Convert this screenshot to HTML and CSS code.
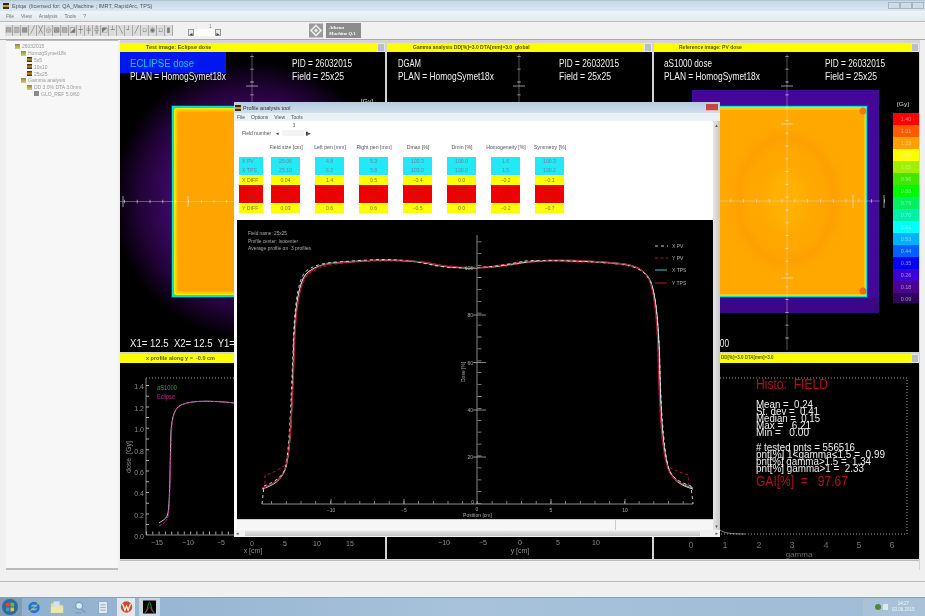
FILE: index.html
```html
<!DOCTYPE html>
<html lang="en">
<head>
<meta charset="utf-8">
<title>Epiqa</title>
<link rel="stylesheet" href="styles.css">
</head>
<body>
<div class="app">
  <header class="titlebar">
    <span class="app-icon"></span>
    <span class="title-text">Epiqa  (licensed for: QA_Machine ; IMRT, RapidArc, TPS)</span>
    <div class="win-btns"><i></i><i></i><i></i></div>
  </header>
  <nav class="menubar"><span>File</span><span>View</span><span>Analysis</span><span>Tools</span><span>?</span></nav>
  <div class="toolbar">
    <div class="tools">
      <b>▤</b><b>▥</b><b>▦</b><b>╱</b><b>╳</b><b>◎</b><b>▩</b><b>▨</b><b>◪</b><b>┼</b><b>╪</b><b>╬</b><b>◩</b><b>┴</b><b>╲</b><b>┘</b><b>╱</b><b>▫</b><b>◉</b><b>▫</b><b>▮</b>
    </div>
    <div class="spinner">
      <span class="spin-num">1</span>
      <span class="spin-arrow">◂</span><span class="spin-box"></span><span class="spin-arrow">▸</span>
    </div>
    <div class="logo">
      <svg class="logo-mark" viewBox="0 0 14 14"><rect width="14" height="14" fill="#9a9a9a"/><path d="M7 2 12 7 7 12 2 7Z" fill="none" stroke="#eee" stroke-width="1.6"/><path d="M7 5 9 7 7 9 5 7Z" fill="#eee"/></svg>
      <div class="logo-box"><em>Athena</em><em>Machine QA</em></div>
    </div>
  </div>

  <main class="main">
    <aside class="tree">
      <div class="node l0"><i class="f"></i>26032015</div>
      <div class="node l1"><i class="f"></i>HomogSymet18x</div>
      <div class="node l2"><i class="th"></i>5x5</div>
      <div class="node l2"><i class="th"></i>10x10</div>
      <div class="node l2"><i class="th"></i>25x25</div>
      <div class="node l1"><i class="f"></i>Gamma analysis</div>
      <div class="node l2"><i class="f"></i>DD 3.0% DTA 3.0mm</div>
      <div class="node l3"><i class="d"></i>GLO_REF 5.0/60</div>
    </aside>

    <div class="panels">
      <section class="panel">
        <div class="phead"><span class="ptitle pt1">Test image: Eclipse dose</span><i class="pbtn"></i></div>
        <svg class="pbody top" viewBox="120 52 265 300">
          <defs>
            <radialGradient id="glow" gradientUnits="userSpaceOnUse" cx="252" cy="200" r="140">
              <stop offset="0.55" stop-color="#40086a"/><stop offset="0.8" stop-color="#220338"/><stop offset="1" stop-color="#000"/>
            </radialGradient>
            <filter id="soft"><feGaussianBlur stdDeviation="5"/></filter>
            <g id="field">
              <rect x="171" y="105" width="163" height="193" fill="#0028ff"/>
              <rect x="172" y="106" width="161" height="191" fill="#00e0d0"/>
              <rect x="173" y="107" width="159" height="189" rx="1" fill="#28e840"/>
              <rect x="174" y="108" width="157" height="187" rx="2" fill="#e8f000"/>
              <rect x="175.500" y="109.500" width="154" height="184" rx="3" fill="#ffc400"/>
              <rect x="177.500" y="111.500" width="150" height="180" rx="4" fill="#ffa400"/>
            </g>
          </defs>
          <rect x="120" y="52" width="265" height="300" fill="url(#glow)"/>
          <use href="#field"/>
          <rect x="120" y="52" width="106" height="21" fill="#0018f0"/>
          <path class="cross" d="M252 54V350M120 201.500H385"/>
          <path class="ticks" d="M252 56V350"/>
          <path class="ticks" d="M124 201.500H385"/>
          <path class="major" d="M246 86H258M123 196V207M188 196V207"/>
          <text class="lg cy" x="130" y="67" textLength="64" lengthAdjust="spacingAndGlyphs">ECLIPSE dose</text>
          <text class="lg" x="130" y="80" textLength="96" lengthAdjust="spacingAndGlyphs">PLAN = HomogSymet18x</text>
          <text class="lg" x="292" y="67" textLength="60" lengthAdjust="spacingAndGlyphs">PID = 26032015</text>
          <text class="lg" x="292" y="80" textLength="52" lengthAdjust="spacingAndGlyphs">Field = 25x25</text>
          <text class="sm" x="361" y="103" textLength="12" lengthAdjust="spacingAndGlyphs">[Gy]</text>
          <text class="lg" x="130" y="347" textLength="170" lengthAdjust="spacingAndGlyphs">X1= 12.5  X2= 12.5  Y1= 12.5  Y2= 12.5</text>
        </svg>
      </section>

      <section class="panel">
        <div class="phead"><span class="ptitle pt2">Gamma analysis DD[%]=3.0 DTA[mm]=3.0  global</span><i class="pbtn"></i></div>
        <svg class="pbody top" viewBox="387 52 265 300">
          <path class="cross" d="M519 54V350"/>
          <path class="ticks" d="M519 56V350"/>
          <path class="major" d="M513 86H525"/>
          <text class="lg" x="398" y="67" textLength="23" lengthAdjust="spacingAndGlyphs">DGAM</text>
          <text class="lg" x="398" y="80" textLength="96" lengthAdjust="spacingAndGlyphs">PLAN = HomogSymet18x</text>
          <text class="lg" x="559" y="67" textLength="60" lengthAdjust="spacingAndGlyphs">PID = 26032015</text>
          <text class="lg" x="559" y="80" textLength="52" lengthAdjust="spacingAndGlyphs">Field = 25x25</text>
        </svg>
      </section>

      <section class="panel">
        <div class="phead"><span class="ptitle pt3">Reference image: PV dose</span><i class="pbtn"></i></div>
        <svg class="pbody top" viewBox="654 52 265 300">
          <rect x="692" y="90" width="187" height="223" fill="#43089a"/>
          <rect x="692" y="298" width="187" height="15" fill="#3c0688"/>
          <rect x="706" y="105" width="162" height="193" fill="#0044ee"/>
          <rect x="707" y="106" width="160" height="191" fill="#10e0c8"/>
          <rect x="708" y="107" width="158" height="189" fill="#c0ee20"/>
          <rect x="709" y="108" width="156" height="187" fill="#ffc800"/>
          <rect x="710" y="110" width="154" height="184" fill="#ffa800"/>
          <g filter="url(#soft)">
            <ellipse cx="786" cy="200" rx="48" ry="62" fill="none" stroke="#fb9c00" stroke-width="8"/>
            <ellipse cx="786" cy="200" rx="20" ry="30" fill="#ffb000"/>
          </g>
          <circle cx="863" cy="111" r="3.500" fill="#f07a10"/>
          <circle cx="863" cy="291" r="3.500" fill="#f2680c"/>
          <path class="cross" d="M787 54V350M692 201H880"/>
          <path class="ticks" d="M787 56V350"/>
          <path class="ticks" d="M692 201H890"/>
          <path class="major" d="M781 86H793M781 124H793M781 278H793M853 195V208M884 195V208"/>
          <text class="lg" x="664" y="67" textLength="48" lengthAdjust="spacingAndGlyphs">aS1000 dose</text>
          <text class="lg" x="664" y="80" textLength="96" lengthAdjust="spacingAndGlyphs">PLAN = HomogSymet18x</text>
          <text class="lg" x="825" y="67" textLength="60" lengthAdjust="spacingAndGlyphs">PID = 26032015</text>
          <text class="lg" x="825" y="80" textLength="52" lengthAdjust="spacingAndGlyphs">Field = 25x25</text>
          <text class="sm" x="897" y="106" textLength="12" lengthAdjust="spacingAndGlyphs">[Gy]</text>
          <g class="bar">
            <rect x="893" y="113" width="27" height="12" fill="#ff0000"/><text x="906" y="121">1.40</text>
            <rect x="893" y="125" width="27" height="12" fill="#ff5a00"/><text x="906" y="133">1.31</text>
            <rect x="893" y="137" width="27" height="12" fill="#ffa000"/><text x="906" y="145">1.23</text>
            <rect x="893" y="149" width="27" height="12" fill="#ffff00"/><text x="906" y="157">1.14</text>
            <rect x="893" y="161" width="27" height="12" fill="#a0f000"/><text x="906" y="169">1.05</text>
            <rect x="893" y="173" width="27" height="12" fill="#40e800"/><text x="906" y="181">0.96</text>
            <rect x="893" y="185" width="27" height="12" fill="#00f800"/><text x="906" y="193">0.88</text>
            <rect x="893" y="197" width="27" height="12" fill="#00f060"/><text x="906" y="205">0.79</text>
            <rect x="893" y="209" width="27" height="12" fill="#00f0a8"/><text x="906" y="217">0.70</text>
            <rect x="893" y="221" width="27" height="12" fill="#00ffff"/><text x="906" y="229">0.61</text>
            <rect x="893" y="233" width="27" height="12" fill="#00b0ff"/><text x="906" y="241">0.53</text>
            <rect x="893" y="245" width="27" height="12" fill="#0060ff"/><text x="906" y="253">0.44</text>
            <rect x="893" y="257" width="27" height="12" fill="#0000f8"/><text x="906" y="265">0.35</text>
            <rect x="893" y="269" width="27" height="12" fill="#3c00d0"/><text x="906" y="277">0.26</text>
            <rect x="893" y="281" width="27" height="12" fill="#4a0090"/><text x="906" y="289">0.18</text>
            <rect x="893" y="293" width="27" height="10" fill="#30005c"/><text x="906" y="301">0.09</text>
          </g>
          <text class="lg" x="729" y="347" text-anchor="end" textLength="36" lengthAdjust="spacingAndGlyphs">MU = 100</text>
        </svg>
      </section>

      <section class="panel">
        <div class="phead"><span class="ptitle pt4">x profile along y =  -0.0 cm</span><i class="pbtn"></i></div>
        <svg class="pbody bot" viewBox="120 362 265 196">
          <path class="axis" d="M146 377V534H385"/>
          <path class="dots" d="M146 377H385"/>
          <path class="yticks" d="M147.500 384V534"/>
          <path class="xticks" d="M146 532H385"/>
          <g class="num">
            <text x="144" y="388" text-anchor="end">1.4</text><text x="144" y="410" text-anchor="end">1.2</text>
            <text x="144" y="431" text-anchor="end">1.0</text><text x="144" y="453" text-anchor="end">0.8</text>
            <text x="144" y="474" text-anchor="end">0.6</text><text x="144" y="495" text-anchor="end">0.4</text>
            <text x="144" y="517" text-anchor="end">0.2</text><text x="144" y="538" text-anchor="end">0.0</text>
            <text x="157" y="544" text-anchor="middle">−15</text><text x="188" y="544" text-anchor="middle">−10</text>
            <text x="221" y="544" text-anchor="middle">−5</text><text x="252" y="545" text-anchor="middle">0</text>
            <text x="285" y="545" text-anchor="middle">5</text><text x="317" y="545" text-anchor="middle">10</text>
            <text x="350" y="545" text-anchor="middle">15</text><text x="253" y="552" text-anchor="middle">x [cm]</text>
            <text transform="translate(131 472) rotate(-90)" textLength="32" lengthAdjust="spacingAndGlyphs">dose  [Gy]</text>
          </g>
          <path class="c-grey" d="M159 522 C163 519 167 518 168 512 C170 500 170 460 171 430 C172 415 175 407 181 404 C190 400 205 399 235 402"/>
          <path class="c-mag" d="M159 525 C164 523 167 520 168.500 514 C170 500 170.500 460 171.500 430 C172.500 415 175 407 181 404 C190 400 205 399 235 402"/>
          <text class="lab green" x="157" y="389" textLength="20" lengthAdjust="spacingAndGlyphs">aS1000</text>
          <text class="lab mag" x="157" y="398" textLength="18" lengthAdjust="spacingAndGlyphs">Eclipse</text>
        </svg>
      </section>

      <section class="panel">
        <div class="phead"></div>
        <svg class="pbody bot" viewBox="387 362 265 196">
          <g class="num">
            <text x="444" y="544" text-anchor="middle">−10</text><text x="483" y="544" text-anchor="middle">−5</text>
            <text x="520" y="544" text-anchor="middle">0</text><text x="558" y="544" text-anchor="middle">5</text>
            <text x="596" y="544" text-anchor="middle">10</text><text x="520" y="552" text-anchor="middle">y [cm]</text>
          </g>
        </svg>
      </section>

      <section class="panel">
        <div class="phead"><span class="ptitle pt6">DD[%]=3.0 DTA[mm]=3.0</span><i class="pbtn"></i></div>
        <svg class="pbody bot" viewBox="654 362 265 196">
          <path class="dots" d="M690 377H907V533H690"/>
          <path class="axis" d="M720 529C724 532 730 533 745 533"/>
          <g class="num big">
            <text x="691" y="547" text-anchor="middle">0</text><text x="725" y="547" text-anchor="middle">1</text>
            <text x="759" y="547" text-anchor="middle">2</text><text x="792" y="547" text-anchor="middle">3</text>
            <text x="826" y="547" text-anchor="middle">4</text><text x="859" y="547" text-anchor="middle">5</text>
            <text x="892" y="547" text-anchor="middle">6</text><text class="gm" x="799" y="556" text-anchor="middle">gamma</text>
          </g>
          <text class="red h1" x="756" y="388" textLength="72" lengthAdjust="spacingAndGlyphs">Histo:  FIELD</text>
          <g class="stat">
            <text x="756" y="407" textLength="57" lengthAdjust="spacingAndGlyphs">Mean =  0.24</text>
            <text x="756" y="414" textLength="63" lengthAdjust="spacingAndGlyphs">St. dev =  0.41</text>
            <text x="756" y="421" textLength="64" lengthAdjust="spacingAndGlyphs">Median =  0.15</text>
            <text x="756" y="428" textLength="55" lengthAdjust="spacingAndGlyphs">Max =   6.21</text>
            <text x="756" y="435" textLength="53" lengthAdjust="spacingAndGlyphs">Min =   0.00</text>
            <text x="756" y="450" textLength="99" lengthAdjust="spacingAndGlyphs"># tested pnts = 556516</text>
            <text x="756" y="457" textLength="129" lengthAdjust="spacingAndGlyphs">pnt[%] 1&lt;gamma&lt;1.5 =  0.99</text>
            <text x="756" y="464" textLength="115" lengthAdjust="spacingAndGlyphs">pnt[%] gamma&gt;1.5 =  1.34</text>
            <text x="756" y="471" textLength="108" lengthAdjust="spacingAndGlyphs">pnt[%] gamma&gt;1 =  2.33</text>
          </g>
          <text class="red h2" x="756" y="485" textLength="92" lengthAdjust="spacingAndGlyphs">GAI[%]  =   97.67</text>
        </svg>
      </section>

      <div class="panels-foot"></div>
    </div>
  </main>

  <div class="statusbar"></div>
  <div class="spacer"></div>

  <footer class="taskbar">
    <div class="orb"><svg viewBox="0 0 16 16"><circle cx="8" cy="8" r="8" fill="#2a6f92"/><path d="M4 4 7.500 3.500V7.500H4Z" fill="#e8452c"/><path d="M8.500 3.500 12 4V7.500H8.500Z" fill="#6cbb3c"/><path d="M4 8.500H7.500V12.500L4 12Z" fill="#2e9be0"/><path d="M8.500 8.500H12V12L8.500 12.500Z" fill="#f5c02a"/></svg></div>
    <div class="tb-ico"><svg viewBox="0 0 16 16"><circle cx="8" cy="8" r="5" fill="none" stroke="#1c78d0" stroke-width="3"/><path d="M3 8H13" stroke="#1c78d0" stroke-width="2"/><path d="M1 13C5 12 12 5 14 1" fill="none" stroke="#f0c030"/></svg></div>
    <div class="tb-ico"><svg viewBox="0 0 16 16"><path d="M1 3H7L8 5H15V14H1Z" fill="#e8d890"/><rect x="4" y="1" width="7" height="7" fill="#cfe4f0"/><path d="M1 7H15V14H1Z" fill="#f0e6a8"/></svg></div>
    <div class="tb-ico"><svg viewBox="0 0 16 16"><circle cx="7" cy="6" r="4" fill="#dceaf4" stroke="#6fa0c6" stroke-width="1.500"/><path d="M10 10 14 14M3 14H9" stroke="#8c99a6" stroke-width="1.500"/></svg></div>
    <div class="tb-ico"><svg viewBox="0 0 16 16"><rect x="3" y="1" width="10" height="14" fill="#dfe9f2" stroke="#8aa6c0"/><path d="M5 5H11M5 8H11M5 11H11" stroke="#8aa6c0"/></svg></div>
    <div class="tb-app"><svg viewBox="0 0 16 16"><circle cx="8" cy="8" r="7" fill="#d04828"/><path d="M3 4 6 12 8 7 10 12 13 4" fill="none" stroke="#fff4d8" stroke-width="1.600"/></svg></div>
    <div class="tb-app dark"><svg viewBox="0 0 16 16"><rect width="16" height="16" fill="#000"/><path d="M2 15C6 14 6 2 8 2S10 14 14 15" fill="none" stroke="#20c040"/><path d="M2 15C5 15 6 8 8 8S11 15 14 15" fill="none" stroke="#c02070"/></svg></div>
    <div class="tray">
      <i class="tray-a"></i><i class="tray-b"></i>
      <div class="clock"><span>14:27</span><span>03.06.2015</span></div>
    </div>
  </footer>

  <div class="dialog">
    <div class="dlg-title"><span class="app-icon"></span><span>Profile analysis tool</span><i class="dlg-close"></i></div>
    <div class="dlg-menu"><span>File</span><span>Options</span><span>View</span><span>Tools</span></div>
    <div class="dlg-body">
      <div class="dlg-main">
        <div class="controls">
          <span class="fn-label">Field number</span>
          <span class="fn-arrow">◂</span>
          <span class="fn-box"><span class="fn-val">3</span></span>
          <span class="fn-arrow">▮▸</span>
        </div>
        <div class="stats">
          <span class="hd"></span><span class="hd">Field size [cm]</span><span class="hd">Left pen [mm]</span><span class="hd">Right pen [mm]</span><span class="hd">Dmax [%]</span><span class="hd">Dmin [%]</span><span class="hd">Homogeneity [%]</span><span class="hd">Symmetry [%]</span>

          <span class="c cy lbl">X PV</span><span class="c cy">25.06</span><span class="c cy">4.8</span><span class="c cy">5.3</span><span class="c cy">103.3</span><span class="c cy">100.0</span><span class="c cy">1.6</span><span class="c cy">100.3</span>
          <span class="c cy lbl">X TPS</span><span class="c cy">25.10</span><span class="c cy">6.2</span><span class="c cy">5.8</span><span class="c cy">103.0</span><span class="c cy">100.0</span><span class="c cy">1.5</span><span class="c cy">100.2</span>
          <span class="c ye lbl">X DIFF</span><span class="c ye">0.04</span><span class="c ye">1.4</span><span class="c ye">0.5</span><span class="c ye">−0.4</span><span class="c ye">0.0</span><span class="c ye">−0.2</span><span class="c ye">−0.1</span>
          <span class="c re lbl">Y PV</span><span class="c re">25.07</span><span class="c re">5.1</span><span class="c re">6.3</span><span class="c re">103.1</span><span class="c re">100.0</span><span class="c re">1.7</span><span class="c re">100.9</span>
          <span class="c re lbl">Y TPS</span><span class="c re">25.10</span><span class="c re">5.5</span><span class="c re">5.6</span><span class="c re">102.6</span><span class="c re">100.0</span><span class="c re">1.5</span><span class="c re">100.2</span>
          <span class="c ye lbl">Y DIFF</span><span class="c ye">0.03</span><span class="c ye">0.6</span><span class="c ye">0.6</span><span class="c ye">−0.5</span><span class="c ye">0.0</span><span class="c ye">−0.2</span><span class="c ye">−0.7</span>
        </div>
        <svg class="plot" viewBox="237 218 476 299">
          <path class="p-axis" d="M477 233V502M262 502H693M477 500V502"/>
          <path class="p-yt" d="M479.500 502V233"/>
          <path class="p-xt" d="M271.200 500.500H690"/>
          <path class="p-axis" d="M473 265.500H486M473 313H486M473 360.500H486M473 408H486M473 455H486M331 497V502M404 497V502M551 497V502M625 497V502"/>
          <g class="p-txt">
            <text x="248" y="233" textLength="39" lengthAdjust="spacingAndGlyphs">Field name: 25x25</text>
            <text x="248" y="241" textLength="50" lengthAdjust="spacingAndGlyphs">Profile center: Isocenter</text>
            <text x="248" y="248" textLength="63" lengthAdjust="spacingAndGlyphs">Average profile on  3 profiles</text>
            <text x="473" y="267.500" text-anchor="end">100</text><text x="473" y="315" text-anchor="end">80</text>
            <text x="473" y="362.500" text-anchor="end">60</text><text x="473" y="410" text-anchor="end">40</text>
            <text x="473" y="457" text-anchor="end">20</text><text x="474" y="502" text-anchor="end">0</text>
            <text x="331" y="510" text-anchor="middle">−10</text><text x="404" y="510" text-anchor="middle">−5</text>
            <text x="477" y="509" text-anchor="middle">0</text><text x="551" y="510" text-anchor="middle">5</text>
            <text x="625" y="510" text-anchor="middle">10</text>
            <text x="463" y="515" textLength="29" lengthAdjust="spacingAndGlyphs">Position [cm]</text>
            <text transform="translate(465 380) rotate(-90)">Dose [%]</text>
            <text x="672" y="246">X PV</text><text x="672" y="258">Y PV</text>
            <text x="672" y="270">X TPS</text><text x="672" y="283">Y TPS</text>
          </g>
          <path class="l-cy" d="M655 268H667M262 486C272 483 282 478 286 464C291 445 292 400 294 350C295 310 298 282 306 272C312 266 322 262 336 260.500C355 259 370 258 385 258C405 258 420 259 432 262C445 265 460 266 477 265.700C495 265 510 262 525 260C540 258 555 258 570 258.500C590 259 610 260 625 262C638 264 647 270 651 280C656 295 658 320 659 350C660 400 662 445 668 464C672 478 682 483 693 486"/>
          <path class="l-wh" d="M262 487C272 484 282 479 286 465C291 445 292 400 293.500 350C294.500 310 298 282 306 272C312 266 322 262 336 261C355 260 370 258 385 258.500C405 258.500 420 259.500 432 262.500C445 265 460 266.500 477 266C495 265.500 510 262.500 525 260.500C540 258.500 555 258.500 570 259C590 259.500 610 260.500 625 262.500C638 264.500 647 270 651 281C656 295 658 320 659.500 350C660.500 400 662 445 668 465C672 479 682 484 693 487"/>
          <path class="l-re" d="M655 281H667M262 486C272 483 282 478 286 464C291 445 292.500 400 294.500 350C295.500 310 299 282 307 272.500C313 266.500 322 262 336 261C355 259.500 370 257.500 385 258C405 258 420 259 432 262C445 265 460 265.500 477 265.500C495 265 510 261.500 525 259.500C540 258 555 258 570 258C590 259 610 260 625 262C638 264 646 269 650 280C655 295 657 320 658 350C659 400 661 445 667 464C671 478 680 481 690 484"/>
          <path class="d-wh" d="M655 244H668M262 502L264 484C272 481 280 477 285 468C289 455 291 400 293 350C294 310 297 280 305 270C312 264 322 261 336 260C355 259 370 257.500 385 257.500C405 258 420 260 432 263C445 266 460 266 477 265.500C495 265 510 262 525 259C540 258 555 258.500 570 259C590 259.500 610 261 625 263C638 265 647 271 651 281C656 295 658 320 659.500 350C660.500 400 663 445 669 468C673 477 682 481 691 484L693 502"/>
          <path class="d-re" d="M655 256H668M265 487L265 473C273 471 280 467 285 463C290 450 292 400 294 350C295 310 299 284 307 274C313 268 322 264 336 262C355 260 370 259 385 259C405 259 420 259 432 261C445 264 460 265 477 266C495 266 510 264 525 261C540 259 555 259 570 260C590 260 610 261 625 263C638 265 646 270 650 279C655 295 657 320 658 350C659 400 661 445 667 463C672 468 680 470 688 473L689 486"/>
        </svg>
        <div class="dlg-status"><span></span><span></span></div>
      </div>
      <div class="vscroll"><span>▴</span><span>▾</span></div>
    </div>
    <div class="hscroll"><span>◂</span><div class="thumb"></div><span>▸</span></div>
  </div>
</div>
</body>
</html>
```

FILE: styles.css
```css
* { box-sizing: border-box; }
html, body { margin: 0; padding: 0; height: 100%; overflow: hidden; background: #f0f0f0; }
body { font-family: "Liberation Sans", Arial, sans-serif; }

.app {
  position: relative;
  width: 925px;
  height: 616px;
  display: flex;
  flex-direction: column;
  filter: blur(0.5px);
}

.titlebar {
  height: 11px;
  display: flex;
  align-items: center;
  gap: 3px;
  padding: 0 0 0 3px;
  background: linear-gradient(#a9bccb 0, #c6d7e6 12%, #dbe7f1 100%);
  font-size: 5.5px;
  color: #555;
}
.app-icon {
  width: 6px;
  height: 6px;
  flex: none;
  background: linear-gradient(#2b2b10 0 40%, #c0a030 40% 60%, #40300c 60%);
}
.title-text { white-space: pre; }
.win-btns { margin-left: auto; display: flex; gap: 0; margin-right: 1px; }
.win-btns i { width: 12px; height: 7px; border: 1px solid #a9b7c3; background: #cfdbe6; }

.menubar {
  height: 11px;
  display: flex;
  align-items: center;
  gap: 7px;
  padding-left: 6px;
  background: linear-gradient(#ecf3f9, #e3e9ef);
  border-bottom: 1px solid #bbb;
  font-size: 5px;
  color: #777;
}

.toolbar {
  height: 18px;
  display: flex;
  align-items: center;
  background: #f1f1f1;
  border-bottom: 1px solid #aaa;
}
.tools { display: flex; padding-left: 5px; width: 188px; }
.tools b {
  width: 8px;
  height: 11px;
  font: 400 7px/11px "DejaVu Sans", sans-serif;
  text-align: center;
  color: #777;
  background: #dcdcdc;
  border-right: 1px solid #aaa;
  overflow: hidden;
}
.spinner { position: relative; display: flex; align-items: center; width: 121px; padding-top: 4px; font-size: 6px; color: #444; }
.spin-num { position: absolute; left: 21px; top: -2px; font-size: 5px; color: #888; }
.spin-arrow { width: 6px; height: 7px; line-height: 7px; text-align: center; font-family: "DejaVu Sans", sans-serif; background: #e8e8e8; border: 1px solid #999; }
.spin-box { width: 21px; height: 7px; background: #fff; }
.logo { display: flex; gap: 3px; align-items: center; }
.logo-mark { width: 14px; height: 15px; display: block; }
.logo-box {
  width: 35px;
  height: 15px;
  background: #8c8c8c;
  display: flex;
  flex-direction: column;
  justify-content: center;
  padding-left: 3px;
  color: #fff;
  font: italic 700 5px/6px "Liberation Serif", serif;
}
.logo-box em { white-space: nowrap; }

.main { height: 530px; display: flex; padding-left: 6px; background: #f0f0f0; }
.tree {
  width: 112px;
  padding: 2px 0 0 0;
  background: #f7f7f7;
  border-top: 1px solid #bbb;
  border-bottom: 2px solid #bbb;
  font-size: 5px;
  color: #999;
  white-space: nowrap;
}
.node { display: flex; align-items: center; gap: 2px; height: 6.800px; }
.l0 { padding-left: 9px; }
.l1 { padding-left: 15px; }
.l2 { padding-left: 21px; }
.l3 { padding-left: 28px; }
.node i { width: 5px; height: 5px; flex: none; }
.node .f { background: linear-gradient(#8a8a40, #d8cc78); }
.node .th { background: linear-gradient(#2c2410, #c08a20 50%, #2c2410); }
.node .d { background: #8c8c8c; }

.panels {
  margin-left: 2px;
  width: 800px;
  padding: 3px 0 0 0;
  display: grid;
  grid-template-columns: repeat(3, 265px);
  grid-template-rows: 309px 204px 11px;
  column-gap: 2px;
  row-gap: 2px;
  background: #d4d4d4;
  align-content: start;
}
.panel { display: flex; flex-direction: column; background: #000; min-width: 0; }
.phead {
  height: 8.500px;
  flex: none;
  position: relative;
  background: #ffff00;
  display: flex;
  align-items: center;
  font: 700 5.500px/8px "Liberation Sans", sans-serif;
  color: #555500;
  white-space: pre;
}
.ptitle { display: block; transform-origin: left center; }
.pt1 { margin-left: 26px; }
.pt2 { margin-left: 26px; font-size: 5px; }
.pt3 { margin-left: 25px; font-size: 5px; }
.pt4 { margin-left: 26px; }
.pt6 { margin-left: 67px; font-size: 4.500px; }
.pbtn { position: absolute; right: 0; top: 0; width: 8px; height: 8.500px; background: #b9bfc6; border: 1px solid #e6e6e6; }
.pbody { display: block; width: 265px; flex: none; background: #000; }
.pbody.top { height: 300px; }
.pbody.bot { height: 196px; }
.panels-foot { grid-column: 1 / -1; background: #f0f0f0; border-top: 1px solid #bbb; }

.cross { stroke: #e8e8e8; stroke-width: 0.6; fill: none; opacity: 0.6; }
.ticks { stroke: #eee; stroke-width: 3.500; stroke-dasharray: 0.8 12; fill: none; opacity: 0.7; }
.major { stroke: #eee; stroke-width: 0.8; fill: none; opacity: 0.75; }

svg text { font-family: "Liberation Sans", Arial, sans-serif; white-space: pre; }
.lg { font-size: 11px; fill: #f0f0f0; }
.lg.cy { fill: #00c8f0; }
.sm { font-size: 6px; fill: #ddd; }
.bar text { font-size: 5.500px; fill: #eee; fill-opacity: 0.55; text-anchor: middle; }

.axis { fill: none; stroke: #aaa; stroke-width: 0.8; }
.dots { fill: none; stroke: #999; stroke-width: 1; stroke-dasharray: 1 2; }
.yticks { stroke: #aaa; stroke-width: 3; stroke-dasharray: 1 9.700; fill: none; }
.xticks { stroke: #aaa; stroke-width: 3; stroke-dasharray: 1 5.300; fill: none; }
.num text { font-size: 7px; fill: #8c8c8c; }
.num.big text { font-size: 9px; fill: #6c6c6c; }
.num.big .gm { font-size: 8px; }
.c-grey { fill: none; stroke: #ccc; stroke-width: 1; }
.c-mag { fill: none; stroke: #c02090; stroke-width: 0.9; stroke-dasharray: 3 1; }
.lab { font-size: 6.500px; }
.green { fill: #1fa51f; }
.mag { fill: #c02090; }
.red { fill: #b01020; }
.h1 { font-size: 14px; }
.h2 { font-size: 15px; }
.stat text { font-size: 11.500px; fill: #eee; }

.statusbar { height: 12px; background: #f0f0f0; border-bottom: 1px solid #bbb; }
.spacer { flex: 1; background: #f0f0f0; }

.taskbar {
  height: 19px;
  display: flex;
  align-items: center;
  background: linear-gradient(90deg, #8fb0cf, #a7c2da 50%, #9fbcd6);
  border-top: 1px solid #8a9fb2;
}
.orb { width: 22px; height: 100%; padding: 1px 2px; background: #7f9bb5; display: flex; align-items: center; }
.orb svg { width: 16px; height: 16px; display: block; }
.tb-ico { width: 23px; display: flex; justify-content: center; }
.tb-ico svg { width: 14px; height: 15px; display: block; }
.tb-app { width: 18px; height: 100%; margin-left: 3px; display: flex; align-items: center; justify-content: center; background: #dfe7ee; }
.tb-app.dark { width: 21px; margin-left: 4px; background: #c9d6e2; }
.tb-app svg { width: 13px; height: 14px; display: block; }
.tray { margin-left: auto; width: 62px; height: 100%; display: flex; align-items: center; gap: 2px; padding-left: 12px; background: #a9c2d8; }
.tray-a { width: 6px; height: 6px; background: #4f8a3c; border-radius: 50%; }
.tray-b { width: 5px; height: 6px; background: #dfe8ef; }
.clock { display: flex; flex-direction: column; align-items: center; margin-left: 2px; font-size: 4.500px; line-height: 6px; color: #eef4f8; white-space: nowrap; }

.dialog {
  position: absolute;
  left: 234px;
  top: 102px;
  width: 486px;
  height: 435px;
  display: flex;
  flex-direction: column;
  background: #fff;
}
.dlg-title {
  height: 11px;
  display: flex;
  align-items: center;
  gap: 2px;
  padding-left: 1px;
  background: linear-gradient(#b6cbdf, #cfdfec);
  font-size: 5.500px;
  color: #333;
}
.dlg-close { margin-left: auto; margin-right: 2px; width: 12px; height: 7px; background: #c24a42; border-bottom: 1px solid #e9b0a8; }
.dlg-menu { height: 8px; display: flex; align-items: center; gap: 6px; padding-left: 3px; background: #e9f0f6; font-size: 5px; color: #555; }
.dlg-body { flex: 1; display: flex; min-height: 0; }
.dlg-main { flex: 1; display: flex; flex-direction: column; padding-left: 3px; min-width: 0; }
.controls { height: 22px; display: flex; align-items: center; padding: 2px 0 0 5px; font-size: 5px; color: #555; }
.fn-label { width: 34px; }
.fn-arrow { font-family: "DejaVu Sans", sans-serif; font-size: 5px; color: #333; }
.fn-box { position: relative; width: 22px; height: 6px; margin: 0 2px 0 3px; background: #f4f4f4; }
.fn-val { position: absolute; left: 11px; top: -8px; color: #666; }
.stats {
  height: 72px;
  margin-bottom: 5px;
  padding-left: 2px;
  display: grid;
  grid-template-columns: 32px repeat(7, 44px);
  grid-template-rows: 14px repeat(6, 9.330px);
  font-size: 5.200px;
  color: #555;
}
.hd { justify-self: center; align-self: start; white-space: nowrap; transform: translateX(-7px); padding-top: 1px; color: #555; font-weight: 400; }
.hd:first-child { transform: none; }
.c { width: 29px; height: 9px; line-height: 9px; text-align: center; white-space: nowrap; }
.lbl { width: 24px; text-align: left; padding-left: 3px; }
.cy { background: #22e8f8; color: #6a8a90; }
.ye { background: #ffff00; color: #7a7a30; }
.re { background: #ee0000; color: #b02020; }

.plot { display: block; width: 476px; height: 299px; flex: none; background: #000; }
.p-axis { fill: none; stroke: #aaa; stroke-width: 0.8; }
.p-yt { stroke: #999; stroke-width: 4; stroke-dasharray: 0.8 11.100; fill: none; }
.p-xt { stroke: #999; stroke-width: 3; stroke-dasharray: 0.8 13.900; fill: none; }
.p-txt text { font-size: 5px; fill: #aaa; }
.l-cy { fill: none; stroke: #40c8c8; stroke-width: 1; }
.l-wh { fill: none; stroke: #d8d8d8; stroke-width: 1; }
.l-re { fill: none; stroke: #b01828; stroke-width: 1.100; }
.d-wh { fill: none; stroke: #d8e8e8; stroke-width: 0.9; stroke-dasharray: 3 3; }
.d-re { fill: none; stroke: #c01830; stroke-width: 0.9; stroke-dasharray: 3 2.500; }

.dlg-status { flex: 1; display: flex; background: #f6f6f6; border-top: 1px solid #ccc; }
.dlg-status span:first-child { width: 379px; border-right: 1px solid #ccc; }
.vscroll {
  width: 7px;
  display: flex;
  flex-direction: column;
  justify-content: space-between;
  align-items: center;
  background: linear-gradient(90deg, #e6e6e6, #c8c8c8);
  font: 5px/8px "DejaVu Sans", sans-serif;
  color: #555;
}
.hscroll { height: 7px; display: flex; align-items: center; justify-content: space-between; padding: 0 2px; background: #f0f0f0; font: 5px/7px "DejaVu Sans", sans-serif; color: #555; }
.thumb { width: 455px; height: 5px; margin-right: 10px; background: linear-gradient(#e4e4e4, #c4c4c4); }
```
